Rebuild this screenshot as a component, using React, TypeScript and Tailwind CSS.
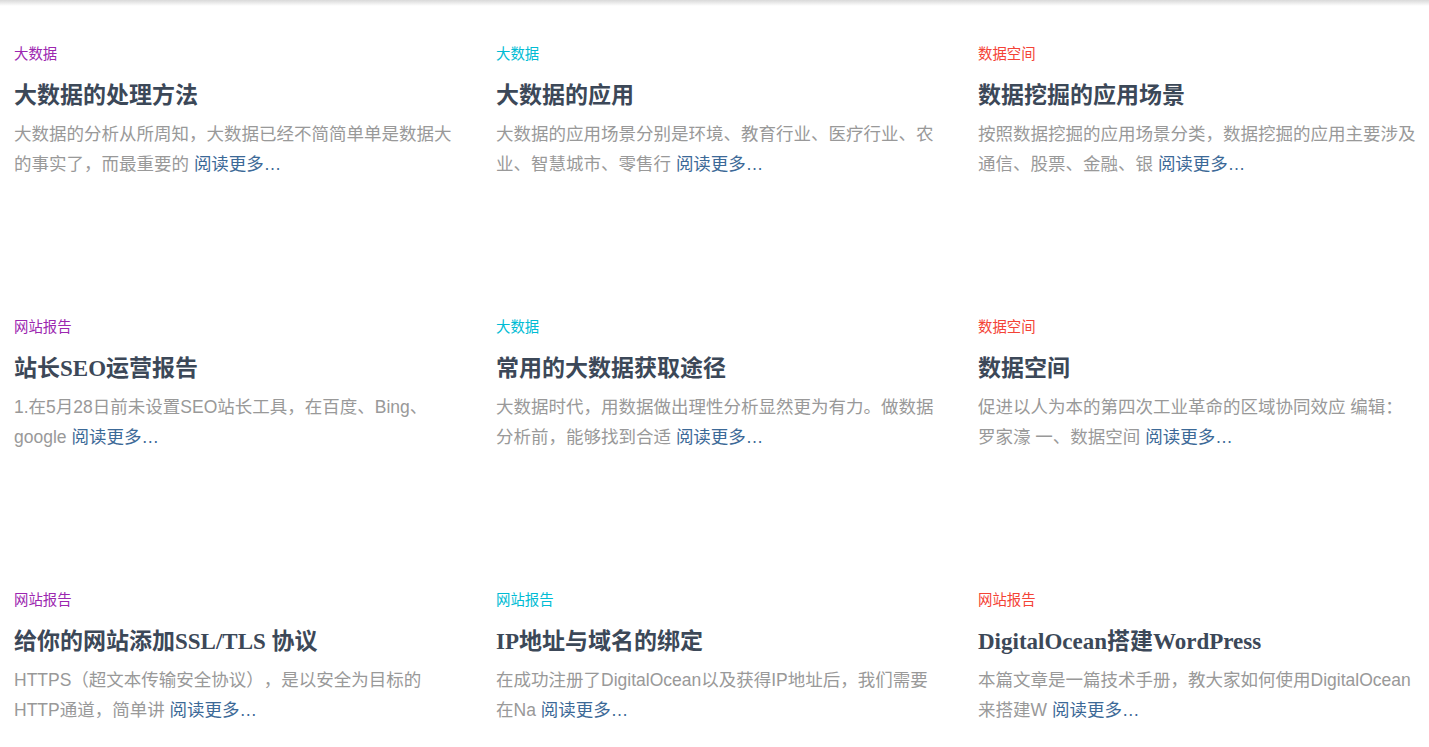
type Post = {
  category: string;
  color: string;
  title: string;
  excerpt: string;
};

const posts: Post[] = [
  {
    category: "大数据",
    color: "text-[#9c27b0]",
    title: "大数据的处理方法",
    excerpt: "大数据的分析从所周知，大数据已经不简简单单是数据大的事实了，而最重要的",
  },
  {
    category: "大数据",
    color: "text-[#00bcd4]",
    title: "大数据的应用",
    excerpt: "大数据的应用场景分别是环境、教育行业、医疗行业、农业、智慧城市、零售行",
  },
  {
    category: "数据空间",
    color: "text-[#f44336]",
    title: "数据挖掘的应用场景",
    excerpt: "按照数据挖掘的应用场景分类，数据挖掘的应用主要涉及通信、股票、金融、银",
  },
  {
    category: "网站报告",
    color: "text-[#9c27b0]",
    title: "站长SEO运营报告",
    excerpt: "1.在5月28日前未设置SEO站长工具，在百度、Bing、google",
  },
  {
    category: "大数据",
    color: "text-[#00bcd4]",
    title: "常用的大数据获取途径",
    excerpt: "大数据时代，用数据做出理性分析显然更为有力。做数据分析前，能够找到合适",
  },
  {
    category: "数据空间",
    color: "text-[#f44336]",
    title: "数据空间",
    excerpt: "促进以人为本的第四次工业革命的区域协同效应 编辑：罗家濠 一、数据空间",
  },
  {
    category: "网站报告",
    color: "text-[#9c27b0]",
    title: "给你的网站添加SSL/TLS 协议",
    excerpt: "HTTPS（超文本传输安全协议），是以安全为目标的HTTP通道，简单讲",
  },
  {
    category: "网站报告",
    color: "text-[#00bcd4]",
    title: "IP地址与域名的绑定",
    excerpt: "在成功注册了DigitalOcean以及获得IP地址后，我们需要在Na",
  },
  {
    category: "网站报告",
    color: "text-[#f44336]",
    title: "DigitalOcean搭建WordPress",
    excerpt: "本篇文章是一篇技术手册，教大家如何使用DigitalOcean来搭建W",
  },
];

const sans = "font-['Liberation_Sans','Noto_Sans_CJK_SC',sans-serif]";
const serif = "font-['Liberation_Serif','Noto_Sans_CJK_SC',serif]";

const PostCard = ({ post }: { post: Post }) => (
  <article className={`${sans} [text-spacing-trim:space-all]`}>
    <a href="#" className={`block text-[14.4px] leading-[20px] ${post.color}`}>
      {post.category}
    </a>
    <h4
      className={`mt-[17px] text-[23px] leading-[30px] font-semibold text-[#3c4858] ${serif}`}
    >
      <a href="#">{post.title}</a>
    </h4>
    <p className="mt-[8px] w-[440px] text-[17.5px] leading-[30px] text-[#999999]">
      {post.excerpt} <a href="#" className="text-[#3c6997]">阅读更多…</a>
    </p>
  </article>
);

export default function App() {
  return (
    <div className="min-h-[747px] bg-white">
      <div className="h-[6px] bg-gradient-to-b from-[#d9d9d9] to-white" />
      <section className="grid grid-cols-[452px_452px_452px] gap-x-[30px] gap-y-[138px] pl-[14px] pt-[38px]">
        {posts.map((post, i) => (
          <PostCard key={i} post={post} />
        ))}
      </section>
    </div>
  );
}
